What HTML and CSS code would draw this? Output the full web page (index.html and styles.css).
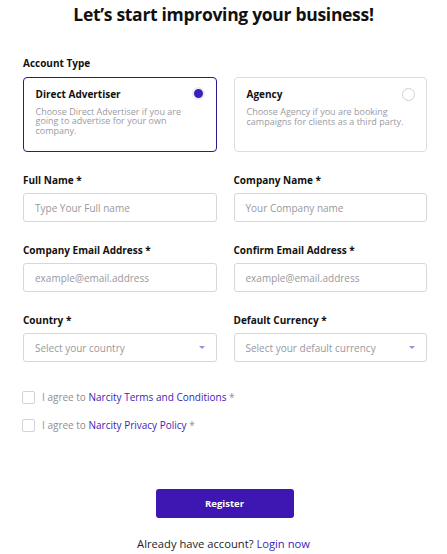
FILE: index.html
```html
<!DOCTYPE html>
<html>
<head>
<meta charset="utf-8">
<link rel="stylesheet" href="styles.css">
</head>
<body>
<div class="page">
  <h1 class="title">Let’s start improving your business!</h1>
  <div class="form">
    <div class="label label-account">Account Type</div>
    <div class="grid cards">
      <div class="card card-active">
        <div class="card-head">
          <span class="card-title">Direct Advertiser</span>
          <span class="radio radio-on"></span>
        </div>
        <p class="card-desc">Choose Direct Advertiser if you are going to advertise for your own company.</p>
      </div>
      <div class="card">
        <div class="card-head">
          <span class="card-title">Agency</span>
          <span class="radio"></span>
        </div>
        <p class="card-desc">Choose Agency if you are booking campaigns for clients as a third party.</p>
      </div>
    </div>

    <div class="grid fields">
      <div class="field">
        <div class="label">Full Name *</div>
        <div class="input">Type Your Full name</div>
      </div>
      <div class="field">
        <div class="label">Company Name *</div>
        <div class="input">Your Company name</div>
      </div>
      <div class="field">
        <div class="label">Company Email Address *</div>
        <div class="input">example@email.address</div>
      </div>
      <div class="field">
        <div class="label">Confirm Email Address *</div>
        <div class="input">example@email.address</div>
      </div>
      <div class="field">
        <div class="label">Country *</div>
        <div class="input select"><span>Select your country</span><span class="caret"></span></div>
      </div>
      <div class="field">
        <div class="label">Default Currency *</div>
        <div class="input select"><span>Select your default currency</span><span class="caret"></span></div>
      </div>
    </div>

    <div class="checks">
      <div class="check"><span class="box"></span><span>I agree to <a class="link">Narcity Terms and Conditions</a> *</span></div>
      <div class="check"><span class="box"></span><span>I agree to <a class="link">Narcity Privacy Policy</a> *</span></div>
    </div>
  </div>
  <div class="actions">
    <button class="register">Register</button>
    <p class="login">Already have account? <a class="link">Login now</a></p>
  </div>
</div>
</body>
</html>
```

FILE: styles.css
```css
* { box-sizing: border-box; }
html, body { margin: 0; padding: 0; background: #fff; }
body {
  font-family: "Open Sans", "Noto Sans", sans-serif;
  color: #1d1d1f;
}
.page { width: 447px; }
.title {
  margin: 0;
  font-size: 17.5px;
  letter-spacing: -0.3px;
  line-height: 28px;
  font-weight: 700;
  text-align: center;
  color: #111;
}
.form {
  margin-left: 23px;
  width: 404px;
}
.label {
  font-size: 10px;
  line-height: 16px;
  font-weight: 700;
  color: #111;
}
.label-account { margin-top: 27px; }
.grid {
  display: grid;
  grid-template-columns: 1fr 1fr;
  column-gap: 17px;
}
.cards { margin-top: 6px; }
.card {
  height: 75px;
  border: 1px solid #dcdce3;
  border-radius: 4px;
  padding: 8px 11px 0 12px;
}
.card-active {
  border: 1.5px solid #2d1a8a;
  padding: 7.5px 10.5px 0 11.5px;
}
.card-head {
  display: flex;
  justify-content: space-between;
  align-items: center;
  height: 16px;
}
.card-title {
  font-size: 10px;
  font-weight: 700;
  color: #111;
}
.radio {
  width: 13px;
  height: 13px;
  border-radius: 50%;
  border: 1px solid #cfcfd6;
  background: #fff;
}
.radio-on {
  border: 2.5px solid #ecebf7;
  background: #3a1fbd;
}
.card-desc {
  margin: 5px 0 0;
  max-width: 164px;
  font-size: 9px;
  line-height: 9.5px;
  color: #9a9a9f;
}
.fields {
  margin-top: 20px;
  row-gap: 20px;
}
.field .label { margin-bottom: 5px; }
.input {
  height: 29px;
  border: 1px solid #d6d6dd;
  border-radius: 3px;
  padding: 0 11px;
  display: flex;
  align-items: center;
  font-size: 10px;
  color: #98989e;
}
.select { justify-content: space-between; }
.caret {
  width: 0;
  height: 0;
  border-left: 3.5px solid transparent;
  border-right: 3.5px solid transparent;
  border-top: 3.5px solid #9c90da;
}
.checks { margin-top: 25px; }
.check {
  display: flex;
  align-items: center;
  height: 20px;
  font-size: 10px;
  color: #8e8e93;
}
.check + .check { margin-top: 8px; }
.box {
  width: 13px;
  height: 13px;
  border: 1px solid #d2d2d8;
  border-radius: 2px;
  margin-left: -1px;
  margin-right: 7px;
}
.link { color: #3b25b8; text-decoration: none; }
.actions {
  display: flex;
  flex-direction: column;
  align-items: center;
  margin-top: 54px;
}
.register {
  width: 138px;
  height: 29px;
  border: none;
  border-radius: 3px;
  background: #3e17b2;
  color: #fff;
  font-family: "Open Sans", "Noto Sans", sans-serif;
  font-size: 9.5px;
  font-weight: 700;
  margin-left: 2px;
}
.login {
  margin: 17px 0 0;
  font-size: 11.2px;
  line-height: 18px;
  color: #1d1d1f;
}
```
